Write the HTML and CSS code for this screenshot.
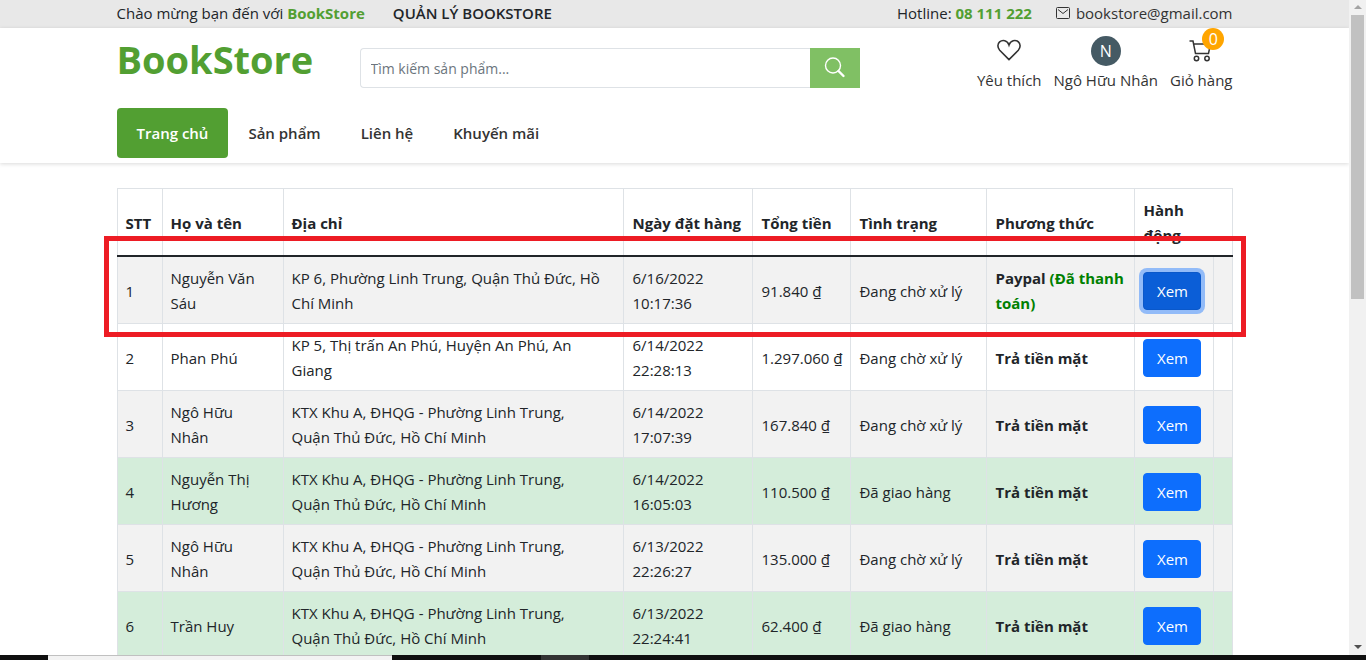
FILE: index.html
```html
<!DOCTYPE html>
<html lang="vi">
<head>
    <meta charset="UTF-8">
    <meta name="viewport" content="width=device-width, initial-scale=1.0">
    <title>BookStore</title>
    <link rel="stylesheet" href="styles.css">
</head>
<body>

<div class="window">
    <div class="page">
        <div class="topbar">
            <div class="container topbar-row">
                <div class="topbar-left">
                    <span>Chào mừng bạn đến với <b class="brand">BookStore</b></span>
                    <a class="admin-link" href="#">QUẢN LÝ BOOKSTORE</a>
                </div>
                <div class="topbar-right">
                    <span>Hotline: <b class="brand">08 111 222</b></span>
                    <a class="mail" href="#">
                        <svg width="14" height="12" viewBox="0 0 14 12" fill="none" stroke="currentColor">
                            <rect x="0.5" y="0.5" width="13" height="11" rx="1"/>
                            <path d="M2 2.5l5 4 5-4"/>
                        </svg>
                        bookstore@gmail.com
                    </a>
                </div>
            </div>
        </div>

        <header class="header">
            <div class="container header-row">
                <a class="logo" href="#">BookStore</a>
                <form class="search">
                    <input type="text" aria-label="Tìm kiếm sản phẩm" placeholder="Tìm kiếm sản phẩm...">
                    <button type="button" aria-label="Tìm kiếm">
                        <svg width="22" height="22" viewBox="0 0 22 22" fill="none" stroke="currentColor">
                            <circle cx="9" cy="8.5" r="7.5" stroke-width="1.4"/>
                            <path d="M14.5 14l5 5" stroke-width="2.4" stroke-linecap="round"/>
                        </svg>
                    </button>
                </form>
                <div class="actions">
                    <a class="action" href="#">
                        <span class="action-icon">
                            <svg width="24" height="24" viewBox="0 0 24 24" fill="none" stroke="currentColor" stroke-width="1.6">
                                <path d="M12 20.6L2.7 11.2C0.3 8.6 0.3 5 2.6 2.9C5.5 0.4 10.4 1.2 12 6C13.6 1.2 18.5 0.4 21.4 2.9C23.7 5 23.7 8.6 21.3 11.2Z"/>
                            </svg>
                        </span>
                        Yêu thích
                    </a>
                    <a class="action" href="#">
                        <span class="action-icon"><span class="avatar">N</span></span>
                        Ngô Hữu Nhân
                    </a>
                    <a class="action" href="#">
                        <span class="action-icon">
                            <svg width="24" height="24" viewBox="0 0 24 24" fill="none" stroke="currentColor" stroke-width="1.5">
                                <path d="M0.5 2H4L6.5 14.5H19.5L21.5 5H4.8"/>
                                <circle cx="7.5" cy="19.5" r="2.2"/>
                                <circle cx="18" cy="19.5" r="2.2"/>
                            </svg>
                            <span class="badge">0</span>
                        </span>
                        Giỏ hàng
                    </a>
                </div>
            </div>
            <nav class="container nav">
                <a class="nav-link active" href="#">Trang chủ</a>
                <a class="nav-link" href="#">Sản phẩm</a>
                <a class="nav-link" href="#">Liên hệ</a>
                <a class="nav-link" href="#">Khuyến mãi</a>
            </nav>
        </header>

        <main class="container orders">
            <div class="table-wrap">
                <table class="table">
                    <colgroup>
                        <col class="col-id">
                        <col class="col-name">
                        <col>
                        <col class="col-date">
                        <col class="col-total">
                        <col class="col-status">
                        <col class="col-method">
                        <col class="col-action">
                        <col class="col-extra">
                    </colgroup>
                    <thead>
                        <tr>
                            <th>STT</th>
                            <th>Họ và tên</th>
                            <th>Địa chỉ</th>
                            <th>Ngày đặt hàng</th>
                            <th>Tổng tiền</th>
                            <th>Tình trạng</th>
                            <th>Phương thức</th>
                            <th colspan="2">Hành<br>động</th>
                        </tr>
                    </thead>
                    <tbody>
                        <tr class="striped">
                            <td>1</td>
                            <td>Nguyễn Văn Sáu</td>
                            <td>KP 6, Phường Linh Trung, Quận Thủ Đức, Hồ Chí Minh</td>
                            <td>6/16/2022 10:17:36</td>
                            <td>91.840 ₫</td>
                            <td>Đang chờ xử lý</td>
                            <td><b>Paypal</b> <b class="paid">(Đã thanh toán)</b></td>
                            <td><button class="btn focused">Xem</button></td>
                            <td></td>
                        </tr>
                        <tr>
                            <td>2</td>
                            <td>Phan Phú</td>
                            <td>KP 5, Thị trấn An Phú, Huyện An Phú, An Giang</td>
                            <td>6/14/2022 22:28:13</td>
                            <td>1.297.060 ₫</td>
                            <td>Đang chờ xử lý</td>
                            <td><b>Trả tiền mặt</b></td>
                            <td><button class="btn">Xem</button></td>
                            <td></td>
                        </tr>
                        <tr class="striped">
                            <td>3</td>
                            <td>Ngô Hữu Nhân</td>
                            <td>KTX Khu A, ĐHQG - Phường Linh Trung,<br>Quận Thủ Đức, Hồ Chí Minh</td>
                            <td>6/14/2022 17:07:39</td>
                            <td>167.840 ₫</td>
                            <td>Đang chờ xử lý</td>
                            <td><b>Trả tiền mặt</b></td>
                            <td><button class="btn">Xem</button></td>
                            <td></td>
                        </tr>
                        <tr class="done">
                            <td>4</td>
                            <td>Nguyễn Thị Hương</td>
                            <td>KTX Khu A, ĐHQG - Phường Linh Trung,<br>Quận Thủ Đức, Hồ Chí Minh</td>
                            <td>6/14/2022 16:05:03</td>
                            <td>110.500 ₫</td>
                            <td>Đã giao hàng</td>
                            <td><b>Trả tiền mặt</b></td>
                            <td><button class="btn">Xem</button></td>
                            <td></td>
                        </tr>
                        <tr class="striped">
                            <td>5</td>
                            <td>Ngô Hữu Nhân</td>
                            <td>KTX Khu A, ĐHQG - Phường Linh Trung,<br>Quận Thủ Đức, Hồ Chí Minh</td>
                            <td>6/13/2022 22:26:27</td>
                            <td>135.000 ₫</td>
                            <td>Đang chờ xử lý</td>
                            <td><b>Trả tiền mặt</b></td>
                            <td><button class="btn">Xem</button></td>
                            <td></td>
                        </tr>
                        <tr class="done">
                            <td>6</td>
                            <td>Trần Huy</td>
                            <td>KTX Khu A, ĐHQG - Phường Linh Trung,<br>Quận Thủ Đức, Hồ Chí Minh</td>
                            <td>6/13/2022 22:24:41</td>
                            <td>62.400 ₫</td>
                            <td>Đã giao hàng</td>
                            <td><b>Trả tiền mặt</b></td>
                            <td><button class="btn">Xem</button></td>
                            <td></td>
                        </tr>
                    </tbody>
                </table>
                <div class="highlight"></div>
            </div>
        </main>
    </div>

    <div class="scrollbar">
        <span class="arrow-up"></span>
        <span class="thumb"></span>
        <span class="arrow-down"></span>
    </div>
</div>
<div class="taskbar">
    <span class="task-search"></span>
    <span class="task-active"></span>
</div>

</body>
</html>
```
FILE: styles.css
```css
* {
    box-sizing: border-box;
}
body {
    margin: 0;
    height: 100vh;
    display: flex;
    flex-direction: column;
    overflow: hidden;
    font-family: "Open Sans", "Noto Sans", sans-serif;
    font-size: 15px;
    line-height: 25px;
    color: #212529;
    background: white;
}
a {
    color: inherit;
    text-decoration: none;
}
.window {
    flex: 1;
    min-height: 0;
    display: flex;
}
.page {
    flex: 1;
    overflow: hidden;
}
.container {
    width: 100%;
    max-width: 1140px;
    margin: 0 auto;
    padding: 0 12px;
}
.brand {
    color: #529f32;
}

/* Top bar */
.topbar {
    background: #e8e8e8;
    height: 28px;
}
.topbar-row {
    display: flex;
    justify-content: space-between;
    line-height: 26px;
}
.topbar-left {
    display: flex;
    gap: 28px;
}
.topbar-right {
    display: flex;
    gap: 24px;
}
.admin-link {
    font-weight: 600;
}
.mail {
    display: flex;
    align-items: center;
    gap: 6px;
    color: #333;
}

/* Header */
.header {
    padding-bottom: 5px;
    box-shadow: 0 1px 4px rgba(0, 0, 0, 0.15);
}
.header-row {
    display: flex;
    height: 80px;
}
.logo {
    width: 243px;
    font-size: 38px;
    font-weight: 700;
    line-height: 62px;
    color: #529f32;
}
.search {
    display: flex;
    width: 500px;
    height: 40px;
    margin-top: 20px;
}
.search input {
    flex: 1;
    min-width: 0;
    padding: 0 10px;
    font: inherit;
    font-size: 14px;
    border: 1px solid #dee2e6;
    border-right: none;
    border-radius: 4px 0 0 4px;
}
.search input::placeholder {
    color: #6c757d;
}
.search button {
    width: 50px;
    display: flex;
    align-items: center;
    justify-content: center;
    border: none;
    color: white;
    background: #80c064;
}
.actions {
    display: flex;
    gap: 12px;
    margin-left: auto;
    padding-top: 5px;
}
.action {
    display: flex;
    flex-direction: column;
    align-items: center;
    color: #333;
}
.action-icon {
    position: relative;
    display: flex;
    align-items: center;
    height: 35px;
}
.avatar {
    width: 30px;
    height: 30px;
    border-radius: 50%;
    font-size: 16px;
    line-height: 30px;
    text-align: center;
    color: white;
    background: #455a64;
}
.badge {
    position: absolute;
    top: -5px;
    right: -11px;
    width: 22px;
    height: 22px;
    border-radius: 50%;
    font-size: 16px;
    line-height: 22px;
    text-align: center;
    color: white;
    background: orange;
}

/* Navigation */
.nav {
    display: flex;
}
.nav-link {
    padding: 0 20px;
    line-height: 50px;
    font-weight: 600;
    color: #333;
}
.nav-link.active {
    border-radius: 4px;
    color: white;
    background: #529f32;
}

/* Orders */
.orders {
    padding-top: 25px;
}
.table-wrap {
    position: relative;
}
.table {
    width: 100%;
    table-layout: fixed;
    border-collapse: collapse;
}
.col-id {
    width: 45px;
}
.col-name {
    width: 121px;
}
.col-date {
    width: 129px;
}
.col-total {
    width: 98px;
}
.col-status {
    width: 136px;
}
.col-method {
    width: 148px;
}
.col-action {
    width: 79px;
}
.col-extra {
    width: 18px;
}
.table th,
.table td {
    padding: 9px 8px 7px;
    border: 1px solid #dee2e6;
    text-align: left;
    vertical-align: middle;
}
.table td:last-child {
    padding: 0;
}
.table th {
    white-space: nowrap;
    border-bottom: 2px solid #212529;
}
.striped {
    background: #f2f2f2;
}
.done {
    background: #d4edda;
}
.paid {
    color: green;
}
.btn {
    display: block;
    min-width: 58px;
    padding: 6px 12px;
    font: inherit;
    line-height: 24px;
    border: 1px solid #0d6efd;
    border-radius: 4px;
    color: white;
    background: #0d6efd;
}
.btn.focused {
    border-color: #0a58ca;
    background: #0b5ed7;
    box-shadow: 0 0 0 4px rgba(49, 132, 253, 0.5);
}
.highlight {
    position: absolute;
    top: 48px;
    left: -13px;
    right: -13px;
    height: 101px;
    border: 5px solid #ed1c24;
}

/* Scrollbar */
.scrollbar {
    width: 17px;
    display: flex;
    flex-direction: column;
    align-items: center;
    background: #f1f1f1;
}
.thumb {
    width: 13px;
    height: 284px;
    margin-bottom: auto;
    background: #c1c1c1;
}
.arrow-up,
.arrow-down {
    border: 4px solid transparent;
}
.arrow-up {
    margin: 1px 0 6px;
    border-bottom-color: #a3a3a3;
}
.arrow-down {
    margin-bottom: 2px;
    border-top-color: #505050;
}

/* Taskbar */
.taskbar {
    display: flex;
    gap: 149px;
    height: 5px;
    padding-left: 48px;
    background: #101010;
}
.task-search {
    width: 344px;
    border-top: 1px solid #c0c0c0;
    background: #f3f3f3;
}
.task-active {
    width: 48px;
    background: #333;
}
```
